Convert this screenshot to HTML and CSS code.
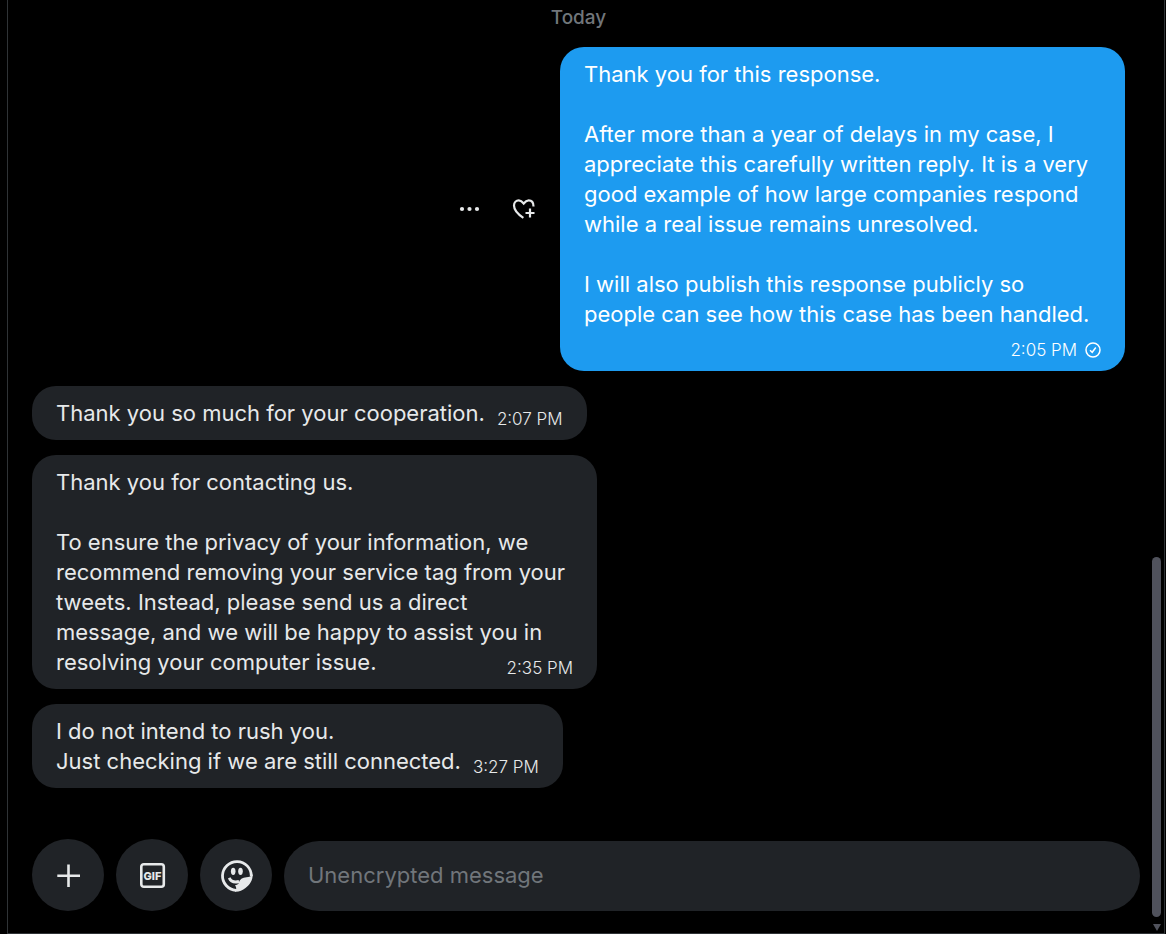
FILE: index.html
```html
<!DOCTYPE html>
<html lang="en">
<head>
  <meta charset="UTF-8" />
  <meta name="viewport" content="width=device-width, initial-scale=1.0" />
  <title>Messages</title>
  <link rel="stylesheet" href="styles.css">
</head>
<body>
  <div class="app">
    <main class="chat">
      <section class="messages">
        <div class="day">Today</div>

        <div class="row sent">
          <div class="actions">
            <button class="action" type="button" aria-label="More">
              <svg width="24" height="24" viewBox="0 0 24 24" fill="currentColor"><circle cx="4" cy="12" r="2.1"/><circle cx="11.500" cy="12" r="2.1"/><circle cx="19" cy="12" r="2.1"/></svg>
            </button>
            <button class="action" type="button" aria-label="Add reaction">
              <svg width="24" height="24" viewBox="0 0 24 24" fill="none" stroke="currentColor" stroke-width="2.2"><path d="M11.400 20.800C5.500 17 2 12.600 2 8.500C2 5.200 4.300 3.400 6.800 3.400C9 3.400 10.400 4.800 11.700 6.500C13 4.800 14.400 3.400 16.600 3.400C19.600 3.400 21.500 5.500 21.500 9.500"/><path d="M18 11.500V20.500M13.500 16H22.500"/></svg>
            </button>
          </div>
          <div class="bubble">Thank you for this response.<br><br>After more than a year of delays in my case, I appreciate this carefully written reply. It is a very good example of how large companies respond while a real issue remains unresolved.<br><br>I will also publish this response publicly so people can see how this case has been handled.<span class="time">2:05 PM
            <svg width="16" height="16" viewBox="0 0 16 16" fill="none" stroke="currentColor" stroke-width="1.500"><circle cx="8" cy="8" r="7"/><path d="M5 8.300L7.200 10.300L10.800 5.500"/></svg></span></div>
        </div>

        <div class="row">
          <div class="bubble">Thank you so much for your cooperation.<span class="time">2:07 PM</span></div>
        </div>

        <div class="row">
          <div class="bubble">Thank you for contacting us.<br><br>To ensure the privacy of your information, we recommend removing your service tag from your tweets. Instead, please send us a direct message, and we will be happy to assist you in resolving your computer issue.<span class="time">2:35 PM</span></div>
        </div>

        <div class="row">
          <div class="bubble">I do not intend to rush you.<br>Just checking if we are still connected.<span class="time">3:27 PM</span></div>
        </div>
      </section>

      <form class="composer">
        <button class="tool" type="button" aria-label="Add attachment">
          <svg width="30" height="30" viewBox="0 0 30 30" fill="none" stroke="currentColor" stroke-width="2.600"><path d="M15.500 4.500V27M4.300 15.700H27"/></svg>
        </button>
        <button class="tool" type="button" aria-label="Add a GIF">
          <svg width="30" height="30" viewBox="0 0 30 30" fill="none" stroke="currentColor"><rect x="4.300" y="4.300" width="22.500" height="22.500" rx="2.500" stroke-width="2.600"/><text class="gif" x="15.500" y="19.500" text-anchor="middle">GIF</text></svg>
        </button>
        <button class="tool" type="button" aria-label="Add a sticker">
          <svg width="34" height="34" viewBox="0 0 34 34"><path d="M32.300 18A14.400 14.400 0 1 0 17 32.300" fill="none" stroke="currentColor" stroke-width="2.800"/><ellipse cx="14.200" cy="13.300" rx="2.300" ry="3.600" fill="currentColor"/><ellipse cx="21.500" cy="13.300" rx="2.300" ry="3.600" fill="currentColor"/><path d="M10.200 19.800C11.800 23.300 15 24.800 20 23.500" fill="none" stroke="currentColor" stroke-width="2.900"/><path d="M33.700 16C32.500 18.500 30 19 27.500 19.300C23.500 19.500 20.500 21.500 19.800 25C19.300 26.500 17.500 27 16 27.200C17.500 29 17.800 31 16 33.700C20 33.900 23.500 32.500 26.500 30C30.500 27 34 22.500 33.700 16Z" fill="currentColor"/></svg>
        </button>
        <input class="field" type="text" placeholder="Unencrypted message" aria-label="Unencrypted message">
      </form>
    </main>

    <div class="scrollbar" aria-hidden="true">
      <div class="thumb"></div>
      <div class="arrow"></div>
    </div>
  </div>
</body>
</html>
```

FILE: styles.css
```css
:root {
  --bg: #000000;
  --text: #e7e9ea;
  --muted: #71767b;
  --card: #202327;
  --blue: #1d9bf0;
  --line: #2f3336;
}
* {
  box-sizing: border-box;
}
body {
  margin: 0;
  background: var(--bg);
  color: var(--text);
  font-family: Inter, "Liberation Sans", sans-serif;
  font-size: 22px;
  line-height: 30px;
}
button {
  border: none;
  padding: 0;
  color: inherit;
  font: inherit;
  cursor: pointer;
}
.app {
  display: flex;
  min-height: 100vh;
  margin: 0 1px 0 7px;
  border: 1px solid var(--line);
  border-top: none;
}
.chat {
  flex: 1;
  min-width: 0;
  display: flex;
  flex-direction: column;
}
.messages {
  flex: 1;
  display: flex;
  flex-direction: column;
  gap: 15px;
  padding: 6px 27px 0 24px;
}
.day {
  margin-bottom: 2px;
  color: var(--muted);
  font-size: 19px;
  font-weight: 500;
  line-height: 24px;
  text-align: center;
}
.row {
  display: flex;
  align-items: center;
}
.sent {
  justify-content: flex-end;
}
.bubble {
  display: flow-root;
  max-width: 565px;
  padding: 12px 24px;
  border-radius: 24px;
  background: var(--card);
}
.sent .bubble {
  background: var(--blue);
  color: #ffffff;
}
.time {
  float: right;
  display: flex;
  align-items: center;
  gap: 8px;
  margin: 12px 0 0 12px;
  font-size: 17px;
  font-weight: 300;
  line-height: 18px;
}
.actions {
  display: flex;
  gap: 12px;
  margin-right: 15px;
}
.action {
  display: flex;
  align-items: center;
  justify-content: center;
  width: 42px;
  height: 42px;
  background: none;
}
.composer {
  display: flex;
  align-items: flex-end;
  gap: 12px;
  padding: 24px 12px 22px 24px;
}
.tool {
  flex: none;
  display: flex;
  align-items: center;
  justify-content: center;
  width: 72px;
  height: 72px;
  border-radius: 50%;
  background: var(--card);
}
.gif {
  fill: currentColor;
  stroke: none;
  font-size: 11px;
  font-weight: 800;
}
.field {
  flex: 1;
  min-width: 0;
  height: 70px;
  padding: 0 24px 2px;
  border: none;
  border-radius: 35px;
  outline: none;
  background: var(--card);
  color: var(--text);
  font: inherit;
}
.field::placeholder {
  color: var(--muted);
  opacity: 1;
}
.scrollbar {
  display: flex;
  flex-direction: column;
  justify-content: flex-end;
  align-items: center;
  gap: 7px;
  width: 9px;
  margin-right: 3px;
  padding-bottom: 2px;
}
.thumb {
  width: 9px;
  height: 360px;
  border-radius: 5px;
  background: #50525c;
}
.arrow {
  border: 4px solid transparent;
  border-top: 7px solid #50525c;
  border-bottom: none;
}
```
